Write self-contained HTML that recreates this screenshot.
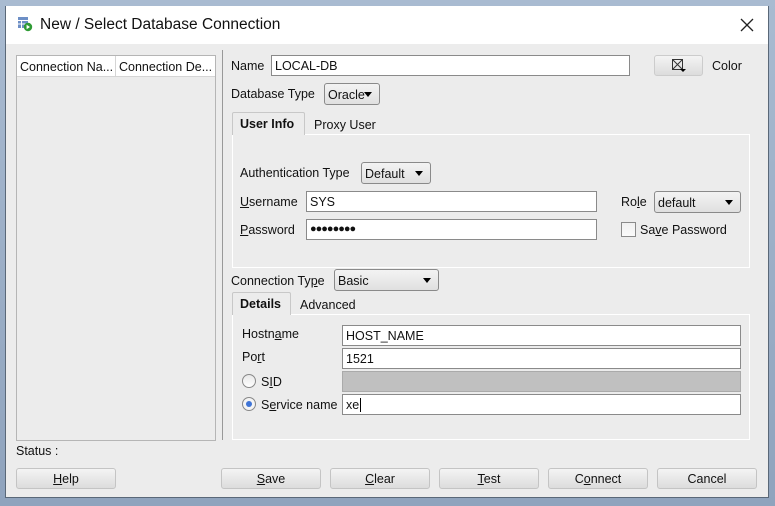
<!DOCTYPE html>
<html><head><style>
*{box-sizing:border-box;margin:0;padding:0}
body{width:775px;height:506px;overflow:hidden;background:linear-gradient(#a9bbd1,#8fa3bd);font-family:"Liberation Sans",sans-serif;font-size:12.5px;color:#111;position:relative}
.a{position:absolute}
.win{left:5px;top:6px;width:764px;height:492px;background:#ececec;border:1px solid #5a6878;border-top:none}
.title{left:6px;top:6px;width:762px;height:38px;background:#fff}
.inp{position:absolute;background:#fff;border:1px solid #8a8a8a;height:21px;padding:3px 0 0 3px;font-size:12.5px}
.cb{position:absolute;border:1px solid #8a8a8a;border-radius:3px;height:22px;background:linear-gradient(#f3f3f3,#e0e0e0);padding:4px 0 0 3px}
.cb:after{content:"";position:absolute;right:7px;top:8px;border-left:4px solid transparent;border-right:4px solid transparent;border-top:5px solid #000}
.btn{position:absolute;top:468px;width:100px;height:21px;border:1px solid #c4c4c4;border-radius:3px;background:linear-gradient(#f4f4f4,#dcdcdc);text-align:center;padding-top:3px}
.lbl{position:absolute}
u{text-decoration:underline}
.panel{position:absolute;border:1px solid #fff}
.tab{position:absolute;border:1px solid #c8c8c8;border-bottom:none;background:#ececec;font-weight:bold;padding:4px 0 0 7px;border-radius:2px 2px 0 0}
</style></head><body>
<div class="a win"></div>
<div class="a title"></div>
<svg class="a" style="left:17px;top:16px" width="16" height="16" viewBox="0 0 16 16"><rect x="1" y="1" width="10" height="11" fill="#6d8fc6"/><path d="M1 4.5h10M1 8h10M4.5 4.5v8" stroke="#fff" stroke-width="1"/><circle cx="11" cy="11" r="4.2" fill="#2f9b35"/><path d="M9.6 8.8v4.4l3.4-2.2z" fill="#fff"/></svg>
<div class="lbl" style="left:40px;top:16px;font-size:15.5px;color:#111">New / Select Database Connection</div>
<svg class="a" style="left:740px;top:18px" width="14" height="14"><path d="M1 1L13 13M13 1L1 13" stroke="#222" stroke-width="1.3"/></svg>

<div class="a" style="left:16px;top:55px;width:200px;height:386px;border:1px solid #b5b5b5;background:#ececec"></div>
<div class="a" style="left:17px;top:56px;width:198px;height:21px;background:#fff;border-bottom:1px solid #d5d5d5"></div>
<div class="a" style="left:115px;top:56px;width:1px;height:21px;background:#d5d5d5"></div>
<div class="lbl" style="left:20px;top:60px">Connection Na...</div>
<div class="lbl" style="left:119px;top:60px">Connection De...</div>
<div class="a" style="left:222px;top:50px;width:1px;height:390px;background:#999"></div>

<div class="lbl" style="left:231px;top:59px">Name</div>
<div class="inp" style="left:271px;top:55px;width:359px">LOCAL-DB</div>
<div class="a" style="left:654px;top:55px;width:49px;height:21px;border:1px solid #ccc;border-radius:3px;background:linear-gradient(#f4f4f4,#dcdcdc)"></div>
<svg class="a" style="left:671px;top:58px" width="16" height="15"><rect x="1.5" y="1.5" width="10" height="10" fill="none" stroke="#333"/><path d="M1.5 1.5l10 10M11.5 1.5l-10 10" stroke="#333"/><path d="M9 11h6l-3 3z" fill="#000"/></svg>
<div class="lbl" style="left:712px;top:59px">Color</div>

<div class="lbl" style="left:231px;top:87px">Database Type</div>
<div class="cb" style="left:324px;top:83px;width:56px">Oracle</div>

<div class="panel" style="left:232px;top:134px;width:518px;height:134px"></div>
<div class="tab" style="left:232px;top:112px;width:73px;height:23px">User Info</div>
<div class="lbl" style="left:314px;top:118px">Proxy User</div>

<div class="lbl" style="left:240px;top:166px">Authentication Type</div>
<div class="cb" style="left:361px;top:162px;width:70px">Default</div>
<div class="lbl" style="left:240px;top:195px"><u>U</u>sername</div>
<div class="inp" style="left:306px;top:191px;width:291px">SYS</div>
<div class="lbl" style="left:621px;top:195px">Ro<u>l</u>e</div>
<div class="cb" style="left:654px;top:191px;width:87px">default</div>
<div class="lbl" style="left:240px;top:223px"><u>P</u>assword</div>
<div class="inp" style="left:306px;top:219px;width:291px;font-size:11px;padding-top:3px;letter-spacing:-1px">●●●●●●●●</div>
<div class="a" style="left:621px;top:222px;width:15px;height:15px;border:1px solid #8a8a8a;background:linear-gradient(#f0f0f0,#fafafa)"></div>
<div class="lbl" style="left:640px;top:223px">Sa<u>v</u>e Password</div>

<div class="lbl" style="left:231px;top:274px">Connection Ty<u>p</u>e</div>
<div class="cb" style="left:334px;top:269px;width:105px">Basic</div>

<div class="panel" style="left:232px;top:314px;width:518px;height:126px"></div>
<div class="tab" style="left:232px;top:292px;width:59px;height:23px">Details</div>
<div class="lbl" style="left:300px;top:298px">Advanced</div>

<div class="lbl" style="left:242px;top:327px">Hostn<u>a</u>me</div>
<div class="inp" style="left:342px;top:325px;width:399px">HOST_NAME</div>
<div class="lbl" style="left:242px;top:350px">Po<u>r</u>t</div>
<div class="inp" style="left:342px;top:348px;width:399px">1521</div>
<div class="a" style="left:242px;top:374px;width:14px;height:14px;border-radius:50%;border:1px solid #888;background:linear-gradient(#e8e8e8,#fff)"></div>
<div class="lbl" style="left:261px;top:375px">S<u>I</u>D</div>
<div class="a" style="left:342px;top:371px;width:399px;height:21px;background:#c0c0c0;border:1px solid #aaa"></div>
<div class="a" style="left:242px;top:397px;width:14px;height:14px;border-radius:50%;border:1px solid #888;background:#f4f4f4"></div>
<div class="a" style="left:246px;top:401px;width:6px;height:6px;border-radius:50%;background:#3f74d6"></div>
<div class="lbl" style="left:261px;top:398px">S<u>e</u>rvice name</div>
<div class="inp" style="left:342px;top:394px;width:399px">xe<span style="border-left:1px solid #000;margin-left:1px"></span></div>

<div class="lbl" style="left:16px;top:444px">Status :</div>
<div class="btn" style="left:16px"><u>H</u>elp</div>
<div class="btn" style="left:221px"><u>S</u>ave</div>
<div class="btn" style="left:330px"><u>C</u>lear</div>
<div class="btn" style="left:439px"><u>T</u>est</div>
<div class="btn" style="left:548px">C<u>o</u>nnect</div>
<div class="btn" style="left:657px">Cancel</div>
</body></html>
